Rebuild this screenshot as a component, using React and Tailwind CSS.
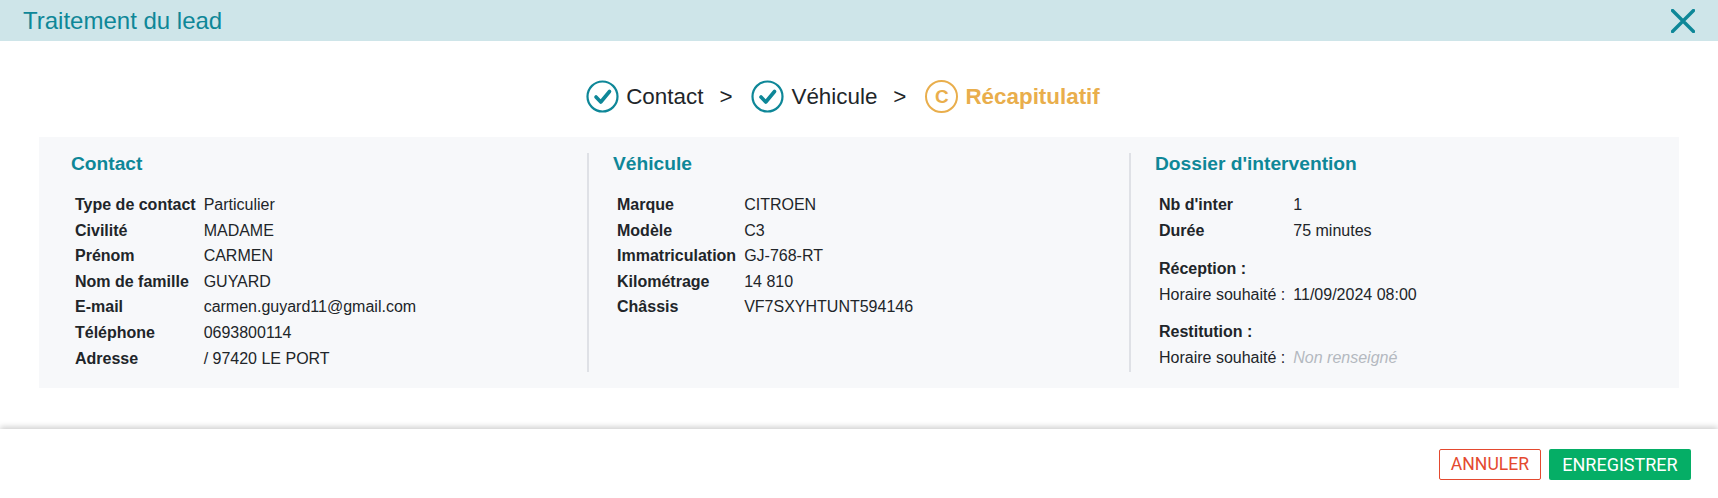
const Row = ({ label, value }) => (
  <>
    <span className="font-bold">{label}</span>
    <span>{value}</span>
  </>
);

const CheckStep = ({ label }) => (
  <div className="flex items-center gap-[7px]">
    <svg width="33" height="33" viewBox="0 0 33 33" fill="none" className="shrink-0">
      <circle cx="16.5" cy="16.5" r="15" stroke="#0e8798" strokeWidth="2.2" />
      <path d="M10 17l4.8 5L23.5 11.5" stroke="#0e8798" strokeWidth="3.6" strokeLinecap="round" strokeLinejoin="round" />
    </svg>
    <span>{label}</span>
  </div>
);

const Arrow = () => <span className="ml-[16px] mr-[19px]">&gt;</span>;

const contact = [
  ['Type de contact', 'Particulier'],
  ['Civilité', 'MADAME'],
  ['Prénom', 'CARMEN'],
  ['Nom de famille', 'GUYARD'],
  ['E-mail', 'carmen.guyard11@gmail.com'],
  ['Téléphone', '0693800114'],
  ['Adresse', '/ 97420 LE PORT'],
];

const vehicule = [
  ['Marque', 'CITROEN'],
  ['Modèle', 'C3'],
  ['Immatriculation', 'GJ-768-RT'],
  ['Kilométrage', '14 810'],
  ['Châssis', 'VF7SXYHTUNT594146'],
];

export default function App() {
  return (
    <div className="flex h-[498px] flex-col overflow-hidden bg-white font-['Liberation_Sans',Arial,sans-serif] text-[#212529]">
      {/* Header */}
      <div className="flex h-[41px] shrink-0 items-center justify-between bg-[#cee5e9] pl-[23px] pr-[23px]">
        <h1 className="text-[24px] text-[#0e8798]">Traitement du lead</h1>
        <svg width="24" height="24" viewBox="0 0 24 24" fill="none">
          <path d="M1.5 1.5l21 21M22.5 1.5l-21 21" stroke="#0e8798" strokeWidth="3.4" strokeLinecap="round" />
        </svg>
      </div>

      {/* Steps */}
      <div className="flex h-[96px] shrink-0 items-center justify-center pr-[32px] pt-[16px] text-[22.4px]">
        <CheckStep label="Contact" />
        <Arrow />
        <CheckStep label="Véhicule" />
        <Arrow />
        <div className="flex items-center gap-[7px] font-bold text-[#e9ae4c]">
          <span className="flex h-[33px] w-[33px] items-center justify-center rounded-full border-2 border-[#e9ae4c] text-[19px]">C</span>
          <span>Récapitulatif</span>
        </div>
      </div>

      {/* Recap */}
      <div className="mx-[39px] grid h-[251px] shrink-0 grid-cols-[548px_542px_1fr] bg-[#f7f8fa] py-[16px] text-[16px]">
        <div className="pl-[32px]">
          <h2 className="text-[19.2px] font-bold leading-[22px] text-[#0e8798]">Contact</h2>
          <div className="mt-[17px] ml-[4px] grid grid-cols-[auto_1fr] gap-x-[8px] leading-[25.6px]">
            {contact.map(([label, value]) => <Row key={label} label={label} value={value} />)}
          </div>
        </div>

        <div className="border-l-2 border-[#dfe1e6] pl-[24px]">
          <h2 className="text-[19.2px] font-bold leading-[22px] text-[#0e8798]">Véhicule</h2>
          <div className="mt-[17px] ml-[4px] grid grid-cols-[auto_1fr] gap-x-[8px] leading-[25.6px]">
            {vehicule.map(([label, value]) => <Row key={label} label={label} value={value} />)}
          </div>
        </div>

        <div className="border-l-2 border-[#dfe1e6] pl-[24px]">
          <h2 className="text-[19.2px] font-bold leading-[22px] text-[#0e8798]">Dossier d'intervention</h2>
          <div className="mt-[17px] ml-[4px] grid grid-cols-[auto_1fr] gap-x-[8px] leading-[25.6px]">
            <Row label="Nb d'inter" value="1" />
            <Row label="Durée" value="75 minutes" />
            <span className="col-span-2 mt-[13px] font-bold">Réception :</span>
            <span>Horaire souhaité :</span>
            <span>11/09/2024 08:00</span>
            <span className="col-span-2 mt-[12px] font-bold">Restitution :</span>
            <span>Horaire souhaité :</span>
            <span className="italic text-[#b4b9c0]">Non renseigné</span>
          </div>
        </div>
      </div>

      {/* Footer */}
      <div className="mt-[41px] flex flex-1 items-start justify-end gap-[8px] pr-[27px] pt-[20px] shadow-[0_-2px_6px_rgba(0,0,0,0.2)] font-['Roboto',sans-serif] text-[17.6px]">
        <button className="h-[31px] w-[102px] rounded-[2px] border border-[#e4492f] text-[#e4492f]">ANNULER</button>
        <button className="h-[31px] w-[142px] rounded-[2px] bg-[#05ae66] text-[18px] text-white">ENREGISTRER</button>
      </div>
    </div>
  );
}
